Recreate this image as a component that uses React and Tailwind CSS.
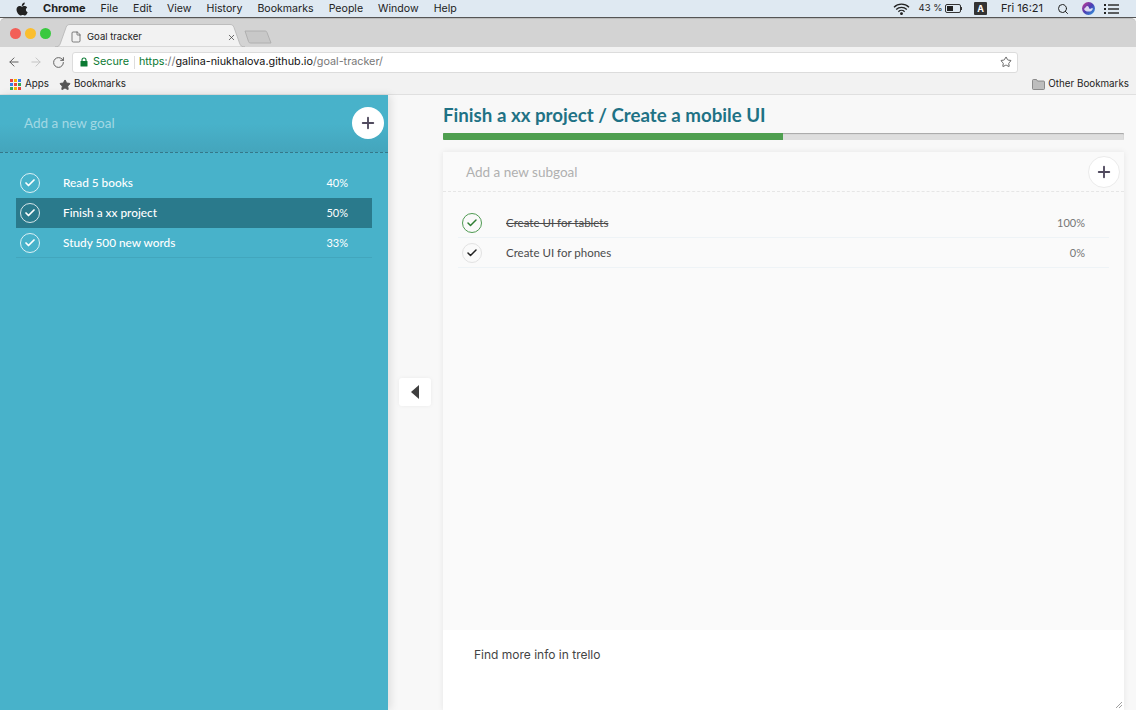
import React from 'react';
import { ArrowLeft, ArrowRight, RotateCw, Star, File, X, Search, Plus, Check } from 'lucide-react';

const menuItems = ['File', 'Edit', 'View', 'History', 'Bookmarks', 'People', 'Window', 'Help'];

const goals = [
    { label: 'Read 5 books', percent: '40%' },
    { label: 'Finish a xx project', percent: '50%', active: true },
    { label: 'Study 500 new words', percent: '33%', last: true },
];

function AppleLogo() {
    return (
        <svg width="12" height="14" viewBox="0 0 24 28" fill="#222">
            <path d="M17.5 1c.2 2-.6 3.600-1.600 4.800-1.100 1.300-2.700 2.200-4.300 2-.2-1.800.6-3.600 1.600-4.700C14.300 1.900 16.100 1.100 17.500 1z" />
            <path d="M12 9.300c1.200 0 2.700-1.300 5-1.300 1.400 0 3.900.5 5.400 2.800-3.900 2.400-3.200 7.900.9 9.500-.9 2.400-3.300 6.700-5.700 6.700-1.500 0-2.200-1-4.200-1s-2.800 1-4.200 1C5.700 27 1 20.500 1 15.200 1 10.500 4 8.100 7 8.100c2 0 3.700 1.200 5 1.200z" />
        </svg>
    );
}

function WifiIcon() {
    return (
        <svg width="17" height="12" viewBox="0 0 17 12" fill="none" stroke="#222" strokeWidth="1.300">
            <path d="M1 4.200a10.600 10.600 0 0 1 15 0" />
            <path d="M3.200 6.500a7.500 7.500 0 0 1 10.600 0" />
            <path d="M5.400 8.700a4.400 4.400 0 0 1 6.200 0" />
            <circle cx="8.500" cy="10.600" r="0.800" fill="#222" />
        </svg>
    );
}

function BatteryIcon() {
    return (
        <div className="flex items-center">
            <div className="w-[16px] h-[9px] border border-[#333] rounded-[2px] p-px">
                <div className="w-[6px] h-full bg-[#222]" />
            </div>
            <div className="w-[1.500px] h-[3px] bg-[#333]" />
        </div>
    );
}

function SiriIcon() {
    return (
        <svg width="13" height="13" viewBox="0 0 13 13">
            <defs>
                <linearGradient id="siri" x1="0" y1="0" x2="1" y2="1">
                    <stop offset="0" stopColor="#d13a8e" />
                    <stop offset="0.500" stopColor="#4a3fb5" />
                    <stop offset="1" stopColor="#2fa0e0" />
                </linearGradient>
            </defs>
            <circle cx="6.500" cy="6.500" r="6.500" fill="url(#siri)" />
            <path d="M2 7c1.500-1 2-3 3.500-3S7 7 8 7s1-1 3-.5C10 9 9 9.500 6.500 9.500S3 9 2 7z" fill="#fff" opacity="0.800" />
        </svg>
    );
}

function ListIcon() {
    return (
        <svg width="15" height="10" viewBox="0 0 15 10" fill="#222">
            <rect x="0" y="0" width="2" height="2" />
            <rect x="0" y="4" width="2" height="2" />
            <rect x="0" y="8" width="2" height="2" />
            <rect x="4" y="0.300" width="11" height="1.400" />
            <rect x="4" y="4.300" width="11" height="1.400" />
            <rect x="4" y="8.300" width="11" height="1.400" />
        </svg>
    );
}

function AppsIcon() {
    const colors = ['#e8453c', '#f4b400', '#3b7de8', '#3b7de8', '#e8453c', '#34a853', '#34a853', '#f4b400', '#e8453c'];
    return (
        <div className="grid grid-cols-3 gap-px w-[11px] h-[11px]">
            {colors.map((color, i) => (
                <svg key={i} width="3" height="3"><rect width="3" height="3" fill={color} /></svg>
            ))}
        </div>
    );
}

function FolderIcon() {
    return (
        <svg width="13" height="11" viewBox="0 0 13 11" fill="#bdbdbd" stroke="#777" strokeWidth="0.800">
            <path d="M.5 1.500a1 1 0 0 1 1-1h3l1 1.500h6a1 1 0 0 1 1 1v6.500a1 1 0 0 1-1 1h-10a1 1 0 0 1-1-1z" />
        </svg>
    );
}

function LockIcon() {
    return (
        <svg width="8" height="10" viewBox="0 0 8 10" className="ml-[7px]">
            <path d="M2 4.500V3a2 2 0 0 1 4 0v1.500" fill="none" stroke="#0b7a33" strokeWidth="1.100" />
            <rect x="0.500" y="4" width="7" height="5.500" rx="0.600" fill="#0b7a33" />
        </svg>
    );
}

function TabShape() {
    return (
        <svg width="192" height="23" viewBox="0 0 192 23" className="block">
            <path d="M0 23c3 0 4.500-1 5.500-4L11 3.500C11.800 1.200 13 .5 15 .5h160c2 0 3.200.7 4 3l5.500 15.500c1 3 2.500 4 5.500 4z" fill="#f2f2f2" stroke="#b4b4b4" strokeWidth="0.800" />
        </svg>
    );
}

function GoalRow({ label, percent, active, last }) {
    return (
        <div className={`h-[30px] flex items-center text-white text-[11.800px] font-medium border-b ${active ? 'bg-[#2a7a8c] border-[#2a7a8c]' : last ? 'border-[#42a6bd]' : 'border-transparent'}`}>
            <div className="ml-[4px] w-[20px] h-[20px] rounded-full border border-white/80 flex items-center justify-center">
                <Check size={12} strokeWidth={3.500} color="#fff" />
            </div>
            <span className="ml-[23px] pt-[1px] flex-1">{label}</span>
            <span className="mr-[24px] pt-[1px] text-[11px] font-normal">{percent}</span>
        </div>
    );
}

function SubgoalRow({ label, percent, done }) {
    return (
        <div className="h-[30px] flex items-center border-b border-[#eef3f6] text-[11.500px] text-[#4a4a4a]">
            <div className={`ml-[4px] w-[20px] h-[20px] rounded-full border flex items-center justify-center ${done ? 'border-[#4f9a52]' : 'border-[#e2e2e2]'}`}>
                <Check size={12} strokeWidth={3} color={done ? '#2e7d32' : '#222'} />
            </div>
            <span className={`ml-[24px] pt-[1px] flex-1 ${done ? 'line-through' : ''}`}>{label}</span>
            <span className="mr-[24px] pt-[1px] text-[11px] text-[#777]">{percent}</span>
        </div>
    );
}

export default function App() {
    return (
        <div className="w-[1136px] h-[710px] overflow-hidden flex flex-col bg-[#f8f8f8] font-['Lato',sans-serif]">
            {/* Menu bar */}
            <div className="h-[18px] shrink-0 flex items-center bg-[#dfe9f2] border-b border-[#555] text-[10.600px] text-[#222] font-['Inter',sans-serif]">
                <div className="ml-[16px] w-[12px] flex"><AppleLogo /></div>
                <span className="ml-[15px] font-bold text-[11px]">Chrome</span>
                <div className="ml-[15px] flex gap-[15px]">
                    {menuItems.map((item) => <span key={item}>{item}</span>)}
                </div>
                <div className="ml-auto flex items-center">
                    <WifiIcon />
                    <span className="ml-[9px] text-[9.500px]">43 %</span>
                    <div className="ml-[2px]"><BatteryIcon /></div>
                    <div className="ml-[12px] w-[13px] h-[13px] bg-[#333] text-white text-[9px] font-bold flex items-center justify-center rounded-[1px]">A</div>
                    <span className="ml-[14px] text-[11px]">Fri 16:21</span>
                    <Search size={12} strokeWidth={2} className="ml-[14px]" />
                    <div className="ml-[13px] flex"><SiriIcon /></div>
                    <div className="ml-[9px] mr-[17px] flex"><ListIcon /></div>
                </div>
            </div>

            {/* Tab strip */}
            <div className="h-[29px] shrink-0 flex items-end bg-[#d3d3d3] border-t border-[#bbb] rounded-t-[5px]">
                <div className="flex items-center gap-[4px] self-start mt-[9px] ml-[10px]">
                    <div className="w-[11px] h-[11px] rounded-full bg-[#f25f58]" />
                    <div className="w-[11px] h-[11px] rounded-full bg-[#fbbe2e]" />
                    <div className="w-[11px] h-[11px] rounded-full bg-[#39c93f]" />
                </div>
                <div className="relative ml-[4px] w-[192px] h-[23px] overflow-hidden">
                    <TabShape />
                    <div className="absolute inset-0 flex items-center pl-[15px] pr-[11px] pt-[3px] text-[9.500px] text-[#222] font-['Inter',sans-serif]">
                        <File size={12} strokeWidth={1.500} color="#555" />
                        <span className="ml-[5px] flex-1">Goal tracker</span>
                        <X size={9} strokeWidth={2} color="#444" />
                    </div>
                </div>
                <svg width="28" height="14" viewBox="0 0 28 14" className="-ml-[3px] mb-[3px]">
                    <path d="M1 1h20c1 0 1.500.3 2 1.500L27 13H6.500c-1 0-1.500-.3-2-1.500z" fill="#c8c8c8" stroke="#a8a8a8" strokeWidth="0.800" />
                </svg>
            </div>

            {/* Toolbar */}
            <div className="h-[26px] shrink-0 pt-[4px] flex items-center bg-[#f2f2f2] text-[#5f5f5f]">
                <ArrowLeft size={14} strokeWidth={1.700} className="ml-[7px]" />
                <ArrowRight size={14} strokeWidth={1.700} color="#c4c4c4" className="ml-[8px]" />
                <RotateCw size={13} strokeWidth={1.800} className="ml-[9px]" />
                <div className="ml-[7px] w-[946px] h-[21px] flex items-center bg-white border border-[#dcdcdc] rounded-[3px] font-['Inter',sans-serif]">
                    <LockIcon />
                    <span className="ml-[5px] pt-[1px] text-[#0b7a33] text-[10.800px]">Secure</span>
                    <div className="ml-[5px] w-px h-[13px] bg-[#ddd]" />
                    <span className="ml-[4px] pt-[1px] text-[10.800px]">
                        <span className="text-[#0b7a33]">https</span>
                        <span className="text-[#777]">://</span>
                        <span className="text-[#111]">galina-niukhalova.github.io</span>
                        <span className="text-[#777]">/goal-tracker/</span>
                    </span>
                    <Star size={12} strokeWidth={1.800} color="#555" className="ml-auto mr-[5px]" />
                </div>
            </div>

            {/* Bookmarks bar */}
            <div className="h-[22px] shrink-0 pt-[2px] flex items-center bg-[#f2f2f2] border-b border-[#e0e0e0] text-[9.800px] text-[#222] font-['Inter',sans-serif]">
                <div className="ml-[10px]"><AppsIcon /></div>
                <span className="ml-[4px]">Apps</span>
                <Star size={12} fill="#555" color="#555" className="ml-[10px]" />
                <span className="ml-[3px]">Bookmarks</span>
                <div className="ml-auto flex items-center mr-[7px]">
                    <FolderIcon />
                    <span className="ml-[3px]">Other Bookmarks</span>
                </div>
            </div>

            {/* Page */}
            <div className="flex-1 min-h-0 flex">
                {/* Goals sidebar */}
                <aside className="w-[388px] shrink-0 bg-[#48b2ca] shadow-[3px_0_8px_rgba(0,0,0,0.1)]">
                    <div className="h-[58px] flex items-center border-b border-dashed border-[#35788a] bg-gradient-to-b from-[#48b2ca] via-[#48b2ca] to-[#44a5bc] pl-[24px] pr-[4px]">
                        <span className="flex-1 text-[13.500px] text-[#a2d8e4]">Add a new goal</span>
                        <div className="w-[32px] h-[32px] rounded-full bg-white flex items-center justify-center -mt-[1px]">
                            <Plus size={18} strokeWidth={2.500} color="#504a5e" />
                        </div>
                    </div>
                    <div className="ml-[16px] mr-[16px] mt-[15px]">
                        {goals.map((goal) => <GoalRow key={goal.label} {...goal} />)}
                    </div>
                </aside>

                {/* Collapse toggle */}
                <div className="w-[55px] shrink-0 flex items-center justify-center pb-[22px]">
                    <div className="w-[32px] h-[28px] -ml-[2px] bg-white rounded-[3px] flex items-center justify-center shadow-[0_0_4px_rgba(0,0,0,0.06)]">
                        <svg width="8" height="14" viewBox="0 0 8 14" fill="#3f3f3f"><path d="M8 0v14L0 7z" /></svg>
                    </div>
                </div>

                {/* Subgoals */}
                <main className="w-[681px] shrink-0 flex flex-col">
                    <h1 className="h-[38px] pt-[7px] text-[18.700px] leading-[26px] font-bold text-[#1f7285]">Finish a xx project / Create a mobile UI</h1>
                    <div className="h-[7px] shrink-0 bg-[#dedede] rounded-[1px] overflow-hidden shadow-[inset_0_1px_1px_rgba(0,0,0,0.25)]">
                        <div className="h-full w-[340px] bg-[#4f9f50]" />
                    </div>
                    <div className="mt-[12px] flex-1 min-h-0 flex flex-col bg-[#fafafa] shadow-[0_0_6px_rgba(0,0,0,0.08)]">
                        <div className="h-[40px] shrink-0 flex items-center border-b border-dashed border-[#e6e6e6] pl-[23px] pr-[4px]">
                            <span className="flex-1 pt-[1px] text-[13.500px] text-[#b0b0b0]">Add a new subgoal</span>
                            <div className="w-[32px] h-[32px] rounded-full bg-white border border-[#ebebeb] flex items-center justify-center">
                                <Plus size={18} strokeWidth={2.500} color="#504a5e" />
                            </div>
                        </div>
                        <div className="flex-1 mt-[16px] mx-[15px]">
                            <SubgoalRow label="Create UI for tablets" percent="100%" done />
                            <SubgoalRow label="Create UI for phones" percent="0%" />
                        </div>
                        <div className="relative h-[80px] shrink-0 bg-white pl-[31px] pt-[15px] text-[12px] leading-[20px] text-[#444] font-['Inter',sans-serif]">
                            Find more info in trello
                            <svg width="8" height="8" viewBox="0 0 8 8" className="absolute right-[1px] bottom-[1px]" stroke="#888" strokeWidth="0.800">
                                <path d="M1 7l6-6M4 7l3-3" />
                            </svg>
                        </div>
                    </div>
                </main>
            </div>
        </div>
    );
}
